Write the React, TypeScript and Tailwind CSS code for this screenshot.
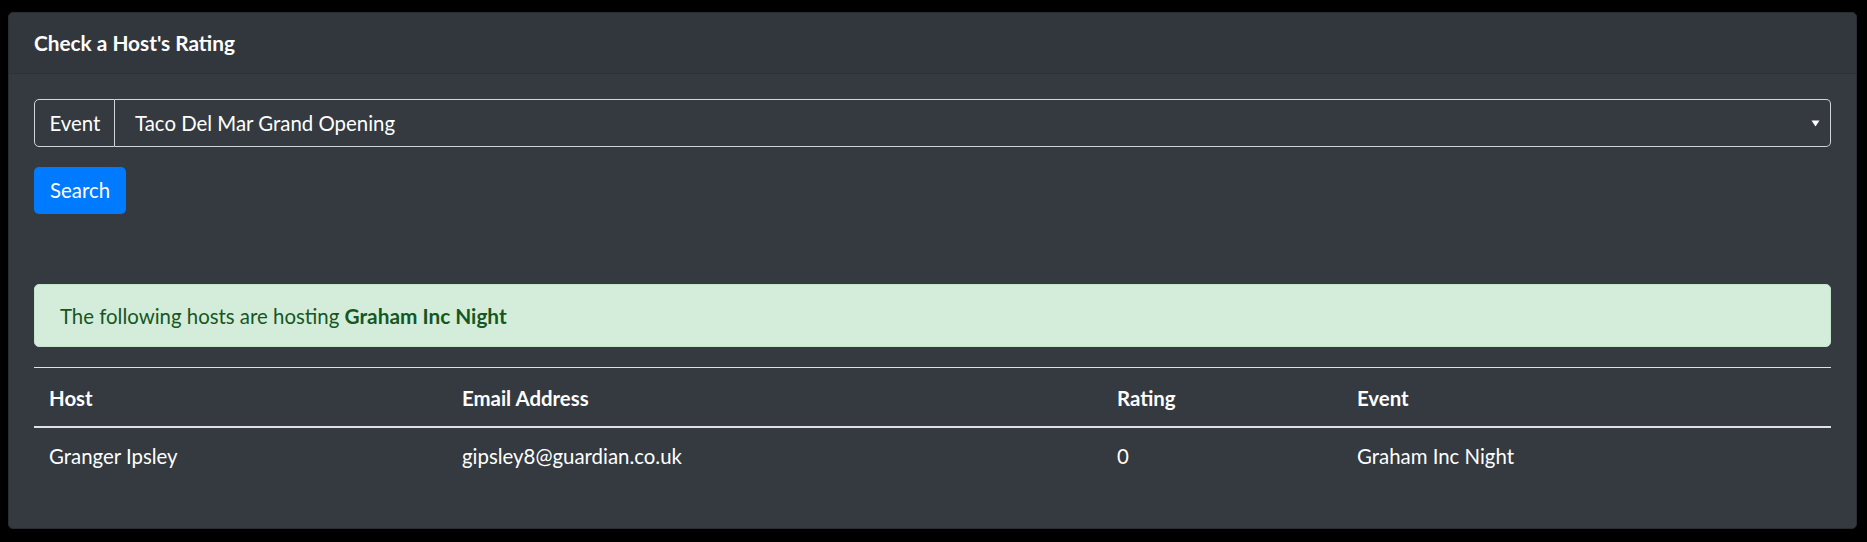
import React from "react";

export default function App() {
  const font = { fontFamily: "Lato, 'Noto Sans', 'Liberation Sans', sans-serif" };
  return (
    <div className="w-[1867px] h-[542px] bg-black pl-[8px] pr-[10px] pt-[12px]" style={font}>
      <div className="w-[1849px] h-[517px] bg-[#343a40] border border-[#2a2e33] rounded-[5px] flex flex-col text-white text-[20.4px] leading-[1.4]">
        <div className="h-[61px] shrink-0 border-b border-[#2c3136] bg-[#32373e] rounded-t-[5px] px-[25px] flex items-center">
          <span className="font-bold text-[20.8px]">Check a Host's Rating</span>
        </div>
        <div className="px-[25px] pt-[25px] flex flex-col">
          <div className="flex h-[48px]">
            <div className="w-[81px] shrink-0 border border-[#ced4da] rounded-l-[5px] flex items-center justify-center pl-[1px]">
              Event
            </div>
            <div className="flex-1 border border-l-0 border-[#ced4da] rounded-r-[5px] flex items-center pl-[20px] pr-[10px] justify-between">
              <span>Taco Del Mar Grand Opening</span>
              <svg width="9" height="7" viewBox="0 0 9 7">
                <path d="M0.5 0.5 L8.5 0.5 L4.5 6.5 Z" fill="#ffffff" />
              </svg>
            </div>
          </div>
          <div className="mt-[20px]">
            <button className="w-[92px] h-[47px] bg-[#007bff] text-white rounded-[5px] flex items-center justify-center">
              Search
            </button>
          </div>
          <div className="mt-[70px] h-[63px] bg-[#d4edda] border border-[#c3e6cb] rounded-[5px] text-[#155724] px-[25px] flex items-center">
            <span>
              The following hosts are hosting <b className="font-bold text-[20.8px]">Graham Inc Night</b>
            </span>
          </div>
          <table className="mt-[20px] w-full table-fixed border-collapse">
            <colgroup>
              <col className="w-[413px]" />
              <col className="w-[655px]" />
              <col className="w-[240px]" />
              <col />
            </colgroup>
            <thead>
              <tr className="h-[59px] border-t border-[#dee2e6] border-b-2 border-b-[#dee2e6]">
                <th className="text-left font-bold px-[15px] pt-[3px]">Host</th>
                <th className="text-left font-bold px-[15px] pt-[3px]">Email Address</th>
                <th className="text-left font-bold px-[15px] pt-[3px]">Rating</th>
                <th className="text-left font-bold px-[15px] pt-[3px]">Event</th>
              </tr>
            </thead>
            <tbody>
              <tr className="h-[58px]">
                <td className="px-[15px] pt-[1px]">Granger Ipsley</td>
                <td className="px-[15px] pt-[1px]">gipsley8@guardian.co.uk</td>
                <td className="px-[15px] pt-[1px]">0</td>
                <td className="px-[15px] pt-[1px]">Graham Inc Night</td>
              </tr>
            </tbody>
          </table>
        </div>
      </div>
    </div>
  );
}
